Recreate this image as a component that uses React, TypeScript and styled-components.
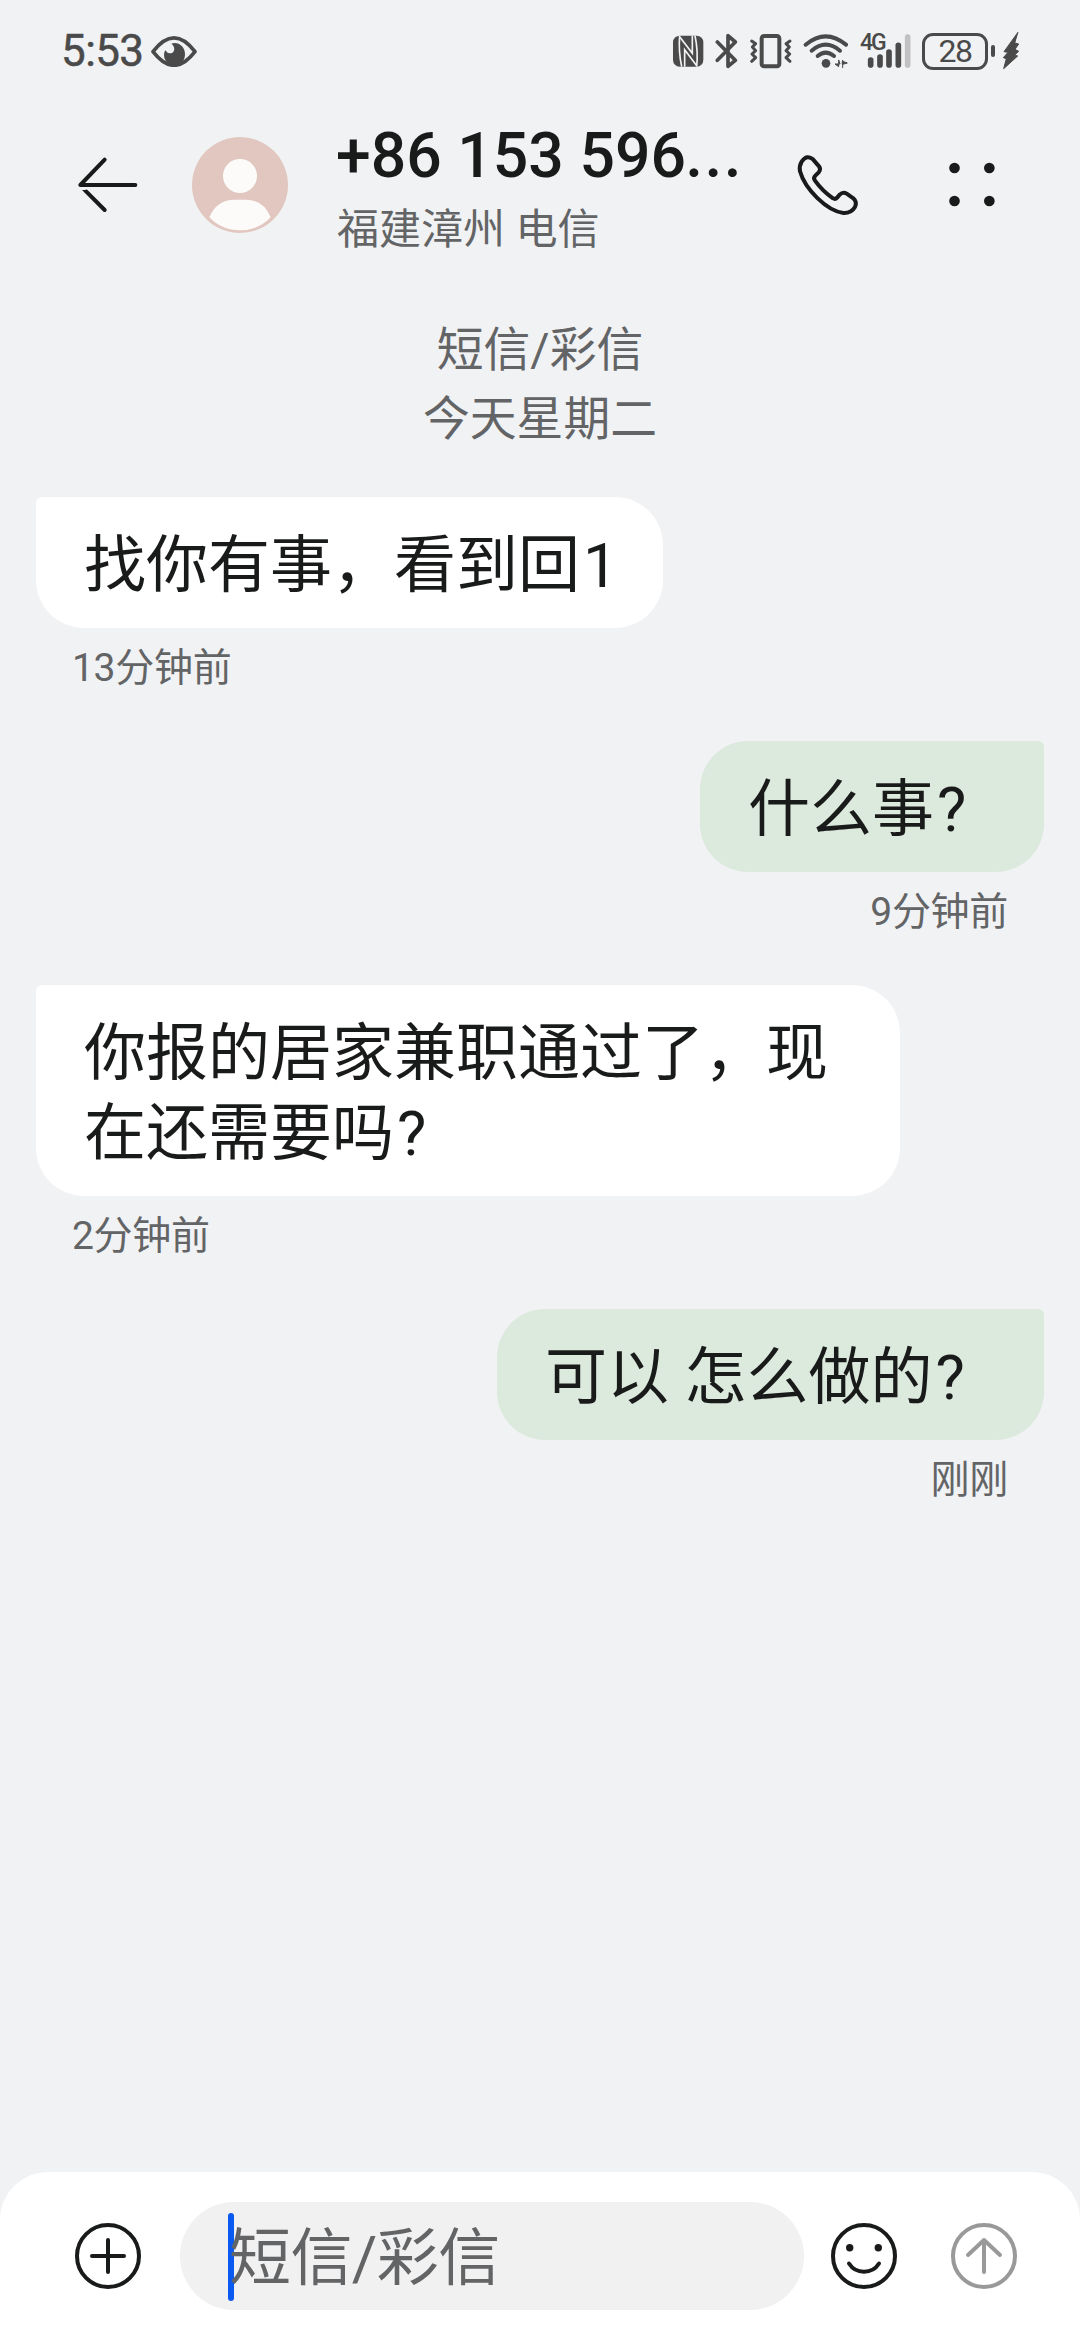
import React from "react";
import styled, { createGlobalStyle } from "styled-components";

const GlobalStyle = createGlobalStyle`
  * { box-sizing: border-box; }
  body {
    margin: 0;
    background: #f1f2f4;
    font-family: Roboto, "Noto Sans CJK SC", sans-serif;
  }
`;

const ink = "#191a1a";
const statusInk = "#4a4a4a";
const muted = "#636466";

const Screen = styled.div`
  width: 1080px;
  height: 2340px;
  display: flex;
  flex-direction: column;
  background: #f1f2f4;
  color: ${ink};
  overflow: hidden;
`;

const StatusBar = styled.div`
  height: 102px;
  padding: 0 61px 0 61px;
  display: flex;
  align-items: center;
  color: ${statusInk};
`;

const Clock = styled.span`
  width: 90px;
  font-size: 44px;
  line-height: 52px;
  letter-spacing: -0.6px;
  -webkit-text-stroke: 0.5px ${statusInk};
`;

const StatusIcons = styled.div`
  margin-left: auto;
  display: flex;
  align-items: center;
`;

const Glyph = styled.svg<{ $gap?: number }>`
  display: block;
  flex: none;
  margin-left: ${(p) => p.$gap ?? 0}px;
  fill: none;
  stroke-linecap: round;
  stroke-linejoin: round;
`;

const Network = styled.div`
  position: relative;
  margin-left: 12px;
`;

const NetworkLabel = styled.span`
  position: absolute;
  left: -1px;
  top: -2px;
  font-size: 23px;
  line-height: 23px;
  font-weight: 500;
  letter-spacing: -2px;
`;

const Battery = styled.div`
  width: 66px;
  height: 37px;
  margin-left: 11px;
  border: 3px solid ${statusInk};
  border-radius: 11px;
  display: flex;
  align-items: center;
  justify-content: center;
  font-size: 32px;
  line-height: 32px;
  letter-spacing: -1.5px;
`;

const BatteryTip = styled.div`
  width: 4px;
  height: 12px;
  margin-left: 3px;
  border-radius: 2px;
  background: ${statusInk};
`;

const Header = styled.header`
  height: 166px;
  padding: 0 60px 0 76px;
  display: flex;
  align-items: center;
`;

const Contact = styled.div`
  flex: none;
  width: 432px;
  margin: 9px 0 0 48px;
`;

const ContactName = styled.h1`
  margin: 0;
  font-size: 62.5px;
  line-height: 60px;
  font-weight: 500;
  white-space: nowrap;
`;

const Ellipsis = styled.span`
  margin-left: 1px;
  font-family: Lato, sans-serif;
  font-size: 58px;
  font-weight: 700;
  letter-spacing: 5.5px;
`;

const ContactPlace = styled.div`
  margin-top: 20px;
  padding-left: 1px;
  font-size: 42px;
  line-height: 48px;
  color: ${muted};
`;

const Thread = styled.main`
  flex: 1;
  padding: 48px 36px 0;
  display: flex;
  flex-direction: column;
`;

const DayHeading = styled.div`
  margin-bottom: 43px;
  font-size: 46.8px;
  line-height: 69px;
  text-align: center;
  color: ${muted};
`;

const Message = styled.div<{ $sent?: boolean }>`
  display: flex;
  flex-direction: column;
  align-items: ${(p) => (p.$sent ? "flex-end" : "flex-start")};
`;

const Bubble = styled.div<{ $sent?: boolean; $width: number }>`
  width: ${(p) => p.$width}px;
  padding: 29px 0 22px 48px;
  border-radius: ${(p) => (p.$sent ? "48px 6px 48px 48px" : "6px 48px 48px 48px")};
  background: ${(p) => (p.$sent ? "#dce9dd" : "#ffffff")};
  font-size: 62px;
  line-height: 80px;
`;

const Line = styled.div`
  display: flex;
  gap: 3px;
  white-space: pre;
`;

const Stamp = styled.time`
  height: 113px;
  padding: 20px 36px 0;
  font-size: 39px;
  line-height: 40px;
  letter-spacing: -0.3px;
  color: ${muted};
`;

const Composer = styled.footer`
  height: 168px;
  padding-top: 30px;
  display: grid;
  grid-template-columns: 180px 624px 120px 120px;
  grid-template-rows: 108px;
  align-items: center;
  justify-items: center;
  background: #ffffff;
  border-radius: 48px 48px 0 0;
`;

const Field = styled.div`
  width: 624px;
  height: 108px;
  padding-left: 48px;
  display: flex;
  align-items: center;
  border-radius: 54px;
  background: #f1f1f1;
`;

const Caret = styled.div`
  width: 6px;
  height: 88px;
  margin: 2px -5px 0 0;
  border-radius: 3px;
  background: #0a59f0;
`;

const Placeholder = styled.span`
  padding-top: 6px;
  font-size: 62px;
  line-height: 80px;
  letter-spacing: -0.6px;
  color: ${muted};
`;

interface ChatMessage {
  lines: string[][];
  time: string;
  width: number;
  sent?: boolean;
}

const messages: ChatMessage[] = [
  { lines: [["找你有事，看到回", "1"]], time: "13分钟前", width: 627 },
  { lines: [["什么事", "?"]], time: "9分钟前", width: 344, sent: true },
  { lines: [["你报的居家兼职通过了，现"], ["在还需要吗", "?"]], time: "2分钟前", width: 864 },
  { lines: [["可以 怎么做的", "?"]], time: "刚刚", width: 547, sent: true },
];

function EyeIcon() {
  return (
    <Glyph width="46" height="31" viewBox="332 74 138 93">
      <path d="M338 121 Q401 38 464 121 Q401 203 338 121 Z" stroke={statusInk} strokeWidth="11" />
      <path
        d="M393 97 C414 90 435 106 434 130 C433 153 415 162 402 162 C385 162 371 148 371 130 Q371 122 375 117 Q381 127 391 126 C404 124 406 106 393 97 Z"
        fill={statusInk}
      />
    </Glyph>
  );
}

function StatusIconRow() {
  return (
    <StatusIcons>
      <Glyph width="32" height="32" viewBox="10 13 96 96">
        <rect x="13" y="15" width="91" height="93" rx="20" fill={statusInk} />
        <g stroke="#f1f2f4" strokeWidth="5" strokeLinecap="butt">
          <path d="M33 15 Q29 62 39 108" />
          <path d="M79 15 Q89 62 84 108" />
          <path d="M34 20 L71 68 V15" strokeLinejoin="miter" />
          <path d="M48 108 V57 L83 104" strokeLinejoin="miter" />
        </g>
      </Glyph>
      <Glyph $gap={11} width="24" height="36" viewBox="163 67 72 108" stroke={statusInk} strokeWidth="11">
        <path d="M170 94 L224 149 L202 167 V75 L224 94 L170 149" />
      </Glyph>
      <Glyph $gap={9} width="46" height="36" viewBox="262 67 138 108" stroke={statusInk} strokeWidth="9">
        <rect x="303" y="76" width="53" height="91" rx="7" strokeWidth="12" />
        <path d="M273 91 L285 99 L275 109 L285 120 L274 130 L285 141 L273 152" />
        <path d="M388 91 L376 99 L386 109 L376 120 L387 130 L376 141 L388 152" />
      </Glyph>
      <Glyph $gap={9} width="46" height="36" viewBox="426 67 138 108" stroke={statusInk} strokeWidth="12">
        <path d="M434 102 Q494 52 555 102" />
        <path d="M452 120 Q494 84 537 120" />
        <path d="M470 136 Q494 116 519 136" />
        <circle cx="495" cy="158" r="13" fill={statusInk} stroke="none" />
        <path d="M533 149 V168 L522 160 H536 Z M545 149 V171 M545 152 L559 157 L545 161 Z" fill={statusInk} stroke={statusInk} strokeWidth="3" />
      </Glyph>
      <Network>
        <NetworkLabel>4G</NetworkLabel>
        <Glyph width="50" height="36" viewBox="598 67 150 108" strokeWidth="17">
          <g stroke={statusInk}>
            <path d="M627 148 V163" />
            <path d="M655 139 V163" />
            <path d="M682 124 V163" />
            <path d="M710 104 V163" />
          </g>
          <path d="M738 79 V163" stroke="#c1c1c3" />
        </Glyph>
      </Network>
      <Battery>28</Battery>
      <BatteryTip />
      <Glyph $gap={7} width="17" height="38" viewBox="1022 65 51 114">
        <path d="M1069 67 L1028 124 L1040 126 L1026 142 L1035 145 L1027 175 L1069 137 L1060 134 L1072 123 L1061 117 L1072 101 L1061 98 Z" fill={statusInk} stroke={statusInk} strokeWidth="3" />
      </Glyph>
    </StatusIcons>
  );
}

function BackIcon() {
  return (
    <Glyph width="62" height="60" viewBox="108 135 186 180" stroke={ink} strokeWidth="12">
      <path d="M286 225 H121 L194 149" />
      <path d="M139 245 L194 300" />
      <path d="M126 240 H142 L136 250 Z" fill={ink} stroke="none" />
    </Glyph>
  );
}

function AvatarIcon() {
  return (
    <Glyph $gap={54} width="96" height="96" viewBox="456 81 288 288">
      <circle cx="600" cy="225" r="144" fill="#e1c7bf" />
      <circle cx="600" cy="198" r="51" fill="#fdfbfa" />
      <path d="M508 322 Q530 269 584 269 H616 Q670 269 692 322 Q655 361 600 361 Q545 361 508 322 Z" fill="#fdfbfa" />
    </Glyph>
  );
}

function PhoneIcon() {
  return (
    <Glyph $gap={28} width="64" height="64" viewBox="769 129 192 192" stroke={ink} strokeWidth="12">
      <path d="M786 155 Q802 132 820 148 L838 169 Q845 178 837 187 L827 197 Q820 204 826 212 Q848 243 880 265 Q887 269 893 262 L900 254 Q910 244 921 251 L941 265 Q953 276 946 291 Q935 310 911 309 C862 303 796 238 781 184 Q778 168 786 155 Z" />
    </Glyph>
  );
}

function MoreIcon() {
  return (
    <Glyph $gap={88} width="48" height="48" viewBox="1224 152 144 144" fill={ink}>
      {[173, 272].map((y) =>
        [1243.5, 1348].map((x) => <circle key={`${x}-${y}`} cx={x} cy={y} r="16" fill={ink} />)
      )}
    </Glyph>
  );
}

const PlusSlot = styled.div`
  justify-self: end;
  margin-right: 39px;
`;

export default function App() {
  return (
    <>
      <GlobalStyle />
      <Screen>
        <StatusBar>
          <Clock>5:53</Clock>
          <EyeIcon />
          <StatusIconRow />
        </StatusBar>
        <Header>
          <BackIcon />
          <AvatarIcon />
          <Contact>
            <ContactName>
              +86 153 596<Ellipsis>...</Ellipsis>
            </ContactName>
            <ContactPlace>福建漳州 电信</ContactPlace>
          </Contact>
          <PhoneIcon />
          <MoreIcon />
        </Header>
        <Thread>
          <DayHeading>
            <div>短信/彩信</div>
            <div>今天星期二</div>
          </DayHeading>
          {messages.map((m) => (
            <Message key={m.time} $sent={m.sent}>
              <Bubble $sent={m.sent} $width={m.width}>
                {m.lines.map((line) => (
                  <Line key={line[0]}>
                    {line.map((run) => (
                      <span key={run}>{run}</span>
                    ))}
                  </Line>
                ))}
              </Bubble>
              <Stamp>{m.time}</Stamp>
            </Message>
          ))}
        </Thread>
        <Composer>
          <PlusSlot>
            <Glyph width="66" height="66" viewBox="0 0 66 66" stroke={ink} strokeWidth="4">
              <circle cx="33" cy="33" r="31" />
              <path d="M33 17 V49 M17 33 H49" />
            </Glyph>
          </PlusSlot>
          <Field>
            <Caret />
            <Placeholder>短信/彩信</Placeholder>
          </Field>
          <Glyph width="66" height="66" viewBox="0 0 66 66" stroke={ink} strokeWidth="4">
            <circle cx="33" cy="33" r="31" />
            <circle cx="18.7" cy="24.7" r="3.7" fill={ink} stroke="none" />
            <circle cx="47.3" cy="24.7" r="3.7" fill={ink} stroke="none" />
            <path d="M18 40.5 C25 51.5 41 51.5 48 40.5" />
          </Glyph>
          <Glyph width="66" height="66" viewBox="0 0 66 66" stroke="#999999" strokeWidth="4">
            <circle cx="33" cy="33" r="31" />
            <path d="M33 17 V49 M17 32 L33 17 L49 32" />
          </Glyph>
        </Composer>
      </Screen>
    </>
  );
}
